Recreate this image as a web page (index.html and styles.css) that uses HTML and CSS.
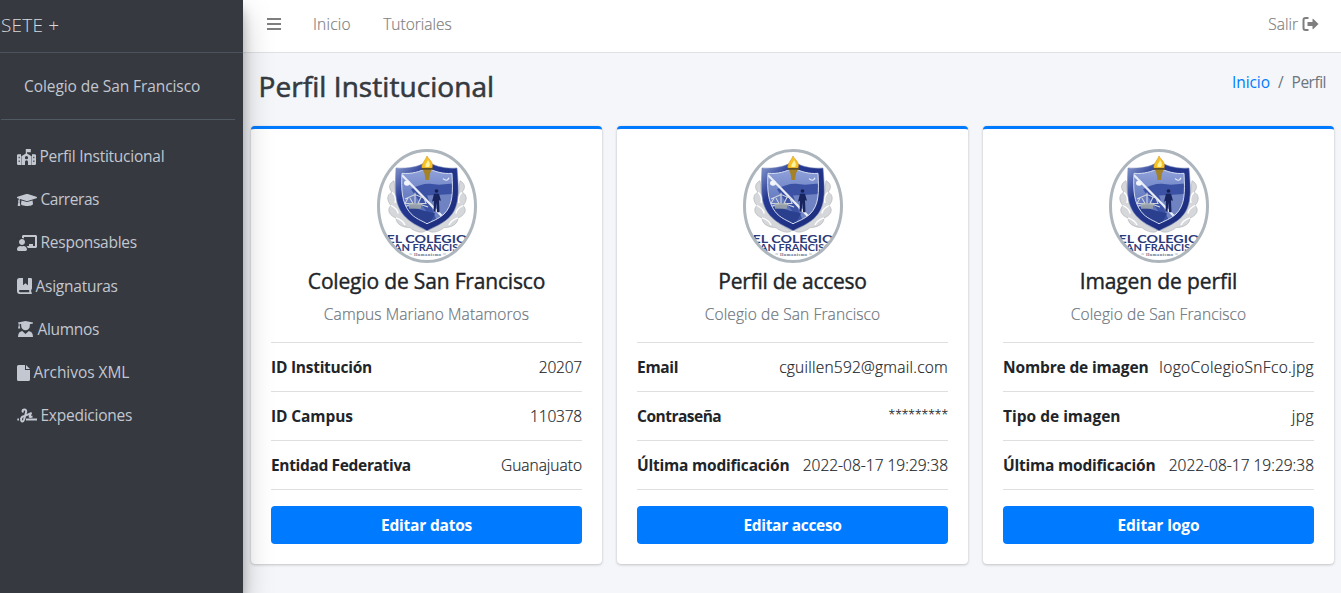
FILE: index.html
```html
<!DOCTYPE html>
<html lang="es">
<head>
<meta charset="utf-8">
<title>Perfil Institucional</title>
<link rel="stylesheet" href="styles.css">
</head>
<body>
<svg class="defs" width="0" height="0" aria-hidden="true">
  <defs>
    <linearGradient id="rim" x1="0" y1="0" x2="1" y2="1">
      <stop offset="0" stop-color="#8fa1d2"/><stop offset=".3" stop-color="#263a94"/><stop offset="1" stop-color="#1b2a78"/>
    </linearGradient>
    <linearGradient id="field" x1="0" y1="0" x2="0" y2="1">
      <stop offset="0" stop-color="#98a9df"/><stop offset=".45" stop-color="#6f84c6"/><stop offset="1" stop-color="#4a60ae"/>
    </linearGradient>
    <clipPath id="oval"><ellipse cx="50" cy="57" rx="47.5" ry="54.5"/></clipPath>
    <clipPath id="inner"><path d="M25 25C35 26 43 23 50 19C58 23 66 26 75 25C76 47 76 61 67 71C61 77 55 79 50 82C46 79 37 76 32 68C25 58 24 43 25 25Z"/></clipPath>
    <symbol id="crest" viewBox="0 0 100 114">
      <ellipse cx="50" cy="57" rx="50" ry="57" fill="#fff"/>
      <g clip-path="url(#oval)">
        <g transform="translate(0 2.5) scale(1 .885)">
          <g fill="#d5d7da" stroke="#a9adb1" stroke-width=".6">
            <path d="M17 33C12 36 11 41 15 46C9 49 10 56 14 61C9 66 13 73 19 75C19 83 27 86 33 86C38 91 46 93 49 89C37 84 27 75 22 62C18 51 18 40 17 33Z"/>
            <path d="M83 33C88 36 89 41 85 46C91 49 90 56 86 61C91 66 87 73 81 75C81 83 73 86 67 86C62 91 54 93 51 89C63 84 73 75 78 62C82 51 82 40 83 33Z"/>
          </g>
          <path d="M15 46C19 50 19 54 18 58M14 61C19 64 21 67 21 70M19 75C24 77 27 80 28 83M85 46C81 50 81 54 82 58M86 61C81 64 79 67 79 70M81 75C76 77 73 80 72 83" fill="none" stroke="#fff" stroke-width="1.5"/>
        </g>
        <g transform="translate(0 2.2) scale(1 .885)">
          <path d="M19 19C33 20 42 17 50 12C59 17 67 20 80 19C82 46 83 64 71 76C64 83 56 86 50 90C45 86 36 83 29 75C17 62 18 44 19 19Z" fill="url(#rim)" stroke="#7788b8" stroke-width=".6"/>
          <g clip-path="url(#inner)">
            <path d="M22 15H80V85H22Z" fill="url(#field)"/>
            <path d="M34 43C42 38 48 36 55 37L62 38L80 36V85H60Z" fill="#3b51a4"/>
            <path d="M50 50L80 48V85H62Z" fill="#6f83c3"/>
            <path d="M24 65C35 60 44 68 58 70L52 84H22Z" fill="#2b3f8f"/>
            <path d="M25 27L69 78" stroke="#e9edf8" stroke-width="2.4"/>
            <circle cx="30" cy="36" r="3" fill="#f3f5fc"/>
            <path d="M66 31Q70 35 72 30" fill="none" stroke="#e9edf9" stroke-width="1.2"/>
            <path d="M28 54L38 49L47 53M31 53L28 59H36L33 53M44 52L41 59H49L47 53M29 62Q39 57 51 63M38 47V60" fill="none" stroke="#d2d7df" stroke-width="1.1"/>
            <path d="M32 59H44V65H32Z" fill="#a3aaa7" opacity=".8"/>
          </g>
          <path d="M25 25C35 26 43 23 50 19C58 23 66 26 75 25C76 47 76 61 67 71C61 77 55 79 50 82C46 79 37 76 32 68C25 58 24 43 25 25Z" fill="none" stroke="#dce2f1" stroke-width="1"/>
          <circle cx="59.5" cy="45" r="1.9" fill="#151f50"/>
          <path d="M57 48H62L64 56L62 55.5L62.5 69H60L59.5 58L58.5 68H56.5L57 56L55 57Z" fill="#17245d"/>
        </g>
        <path d="M45.5 20H55L53 24.5L52 31H48.5L47.5 24.5Z" fill="#a38228"/>
        <path d="M45 19C44 15 48 12 50 7C52 11 57 13 55 19Z" fill="#f5c326" stroke="#d6961e" stroke-width=".6"/>
        <path d="M48.5 18C48 15 50 14 51 11C53 14 53.5 16 52 18Z" fill="#fff3a2"/>
        <path d="M44.5 19H56V20.8H44.5Z" fill="#5f4f29"/>
        <g text-anchor="middle" class="crest-text">
          <text x="50" y="94" font-size="11" textLength="81" lengthAdjust="spacingAndGlyphs">EL COLEGIO</text>
          <text x="54" y="102.3" font-size="9.5" textLength="86" lengthAdjust="spacingAndGlyphs">SAN FRANCISCO</text>
          <text x="50.5" y="107" font-size="4.5" textLength="36" class="motto">~ Humanismo ~</text>
        </g>
      </g>
      <ellipse cx="50" cy="57" rx="48.5" ry="55.5" fill="none" stroke="#adb5bd" stroke-width="3"/>
    </symbol>
  </defs>
</svg>
<div class="app">
  <aside class="sidebar">
    <div class="brand"><span class="t-brand">SETE +</span></div>
    <div class="user"><span class="t-user">Colegio de San Francisco</span></div>
    <nav class="menu">
      <a class="item"><svg width="19" height="16" viewBox="0 0 19 16"><path fill-rule="evenodd" d="M8.8 0h5v3.2H10v1.2L14.6 7.2V16H11v-3.2a1.5 1.5 0 0 0-3 0V16H4.4V7.2l4.4-2.8ZM9.5 7.1a1.6 1.6 0 1 0 0 3.2a1.6 1.6 0 0 0 0-3.2ZM4 5.2V16H1.2Q0 16 0 14.8V6.4Q0 5.2 1.2 5.2ZM1.6 7.8v1.5h1.1v-1.5ZM1.6 11.6v1.5h1.1v-1.5ZM15 5.2h2.8Q19 5.2 19 6.4v8.4Q19 16 17.8 16H15ZM16.3 7.8v1.5h1.1v-1.5ZM16.3 11.6v1.5h1.1v-1.5Z"/></svg><span class="t1">Perfil Institucional</span></a>
      <a class="item"><svg width="20" height="16" viewBox="0 0 640 512"><path d="M622.34 153.2L343.4 67.5c-15.2-4.67-31.6-4.67-46.79 0L17.66 153.2c-23.54 7.23-23.54 38.36 0 45.59l48.63 14.94c-10.67 13.19-17.23 29.28-17.88 46.9C38.78 266.15 32 276.11 32 288c0 10.78 5.68 19.85 13.86 25.65L20.33 428.53C18.11 438.52 25.71 448 35.94 448h56.11c10.24 0 17.84-9.48 15.62-19.47L82.14 313.65C90.32 307.85 96 298.78 96 288c0-11.57-6.47-21.25-15.66-26.87.76-15.02 8.44-28.3 20.69-36.72L296.6 284.5c9.06 2.78 26.44 6.25 46.79 0l278.95-85.7c23.55-7.24 23.55-38.36 0-45.6zM352.79 315.09c-28.53 8.76-52.84 3.92-65.59 0l-145.02-44.55L128 384c0 35.35 85.96 64 192 64s192-28.65 192-64l-14.18-113.47-145.03 44.56z"/></svg><span class="t2">Carreras</span></a>
      <a class="item"><svg width="20" height="16" viewBox="0 0 640 512"><path d="M208 352c-2.39 0-4.78.35-7.06 1.09C187.98 357.3 174.35 360 160 360c-14.35 0-27.98-2.7-40.95-6.91-2.28-.74-4.66-1.09-7.05-1.09C49.94 352-.33 402.48 0 464.62.14 490.88 21.73 512 48 512h224c26.27 0 47.86-21.12 48-47.38.33-62.14-49.94-112.62-112-112.62zm-48-32c53.02 0 96-42.98 96-96s-42.98-96-96-96-96 42.98-96 96 42.98 96 96 96zM592 0H208c-26.47 0-48 22.25-48 49.59V96c23.42 0 45.1 6.78 64 17.8V64h352v288h-64v-64H384v64h-76.24c19.1 16.69 33.12 38.73 39.69 64H592c26.47 0 48-22.25 48-49.59V49.59C640 22.25 618.47 0 592 0z"/></svg><span class="t3">Responsables</span></a>
      <a class="item"><svg width="15" height="16" viewBox="0 0 15 16"><path fill-rule="evenodd" d="M2.5 0H6v7.2L8.4 5.3L11 7.2V0h2.7Q15 0 15 1.2v9.3q0 .8-.8 1.2v2.5q.8 0 .8.9t-.8.9H2.8Q0 16 0 13V2.5Q0 0 2.5 0ZM3 12q-1 0-1 1.1t1 1.1h9.2V12Z"/></svg><span class="t4">Asignaturas</span></a>
      <a class="item"><svg width="17" height="16" viewBox="0 0 17 16"><path d="M8.5 0L16 1.5v1L12.8 3.2V5a4.3 4.3 0 0 1-8.6 0V3.2L2.6 2.8v1.7l.7 3H1l.7-3v-2L1 2.2v-.7ZM5.2 10L8.5 13L11.8 10Q16 10.7 16 16H1Q1 10.7 5.2 10Z"/></svg><span class="t5">Alumnos</span></a>
      <a class="item"><svg width="13" height="16" viewBox="0 0 13 16"><path d="M1.5 0H8v5h5v9.5Q13 16 11.5 16h-10Q0 16 0 14.5v-13Q0 0 1.5 0ZM9 0l4 4H9Z"/></svg><span class="t6">Archivos XML</span></a>
      <a class="item"><svg width="20" height="16" viewBox="0 0 20 16"><path class="line" d="M.3 11.4H2M6 4.5L5.6 3.2Q5.6 1.5 7.4 1.5Q9.4 1.5 9.2 3.8L7.1 11.5Q6.4 13.8 5 13.5Q3.7 13 4.1 11Q4.4 8.2 8.5 7.7L14 5.2L12.6 8.4Q12.6 9.2 13.6 9L15.5 8.6M9 11.4H20" /></svg><span class="t7">Expediciones</span></a>
    </nav>
  </aside>
  <div class="main">
    <header class="topbar">
      <svg class="bars" width="14" height="14" viewBox="0 0 14 14"><path d="M0 1h14v2H0ZM0 6h14v2H0ZM0 11h14v2H0Z"/></svg>
      <span class="t-inicio">Inicio</span>
      <span class="t-tut">Tutoriales</span>
      <span class="logout"><span class="t-salir">Salir</span><svg width="17" height="14" viewBox="0 0 16 14"><path d="M6 1H3Q1 1 1 3v8q0 2 2 2h3" fill="none" stroke="#7f7f7f" stroke-width="2"/><path d="M5 5h5V2.4q0-1 .9-.3L16 7l-5.1 4.9q-.9.7-.9-.3V9H5Z"/></svg></span>
    </header>
    <div class="heading">
      <h1><span class="t-h1">Perfil Institucional</span></h1>
      <div class="crumbs"><a class="t-c1">Inicio</a><span>/</span><span class="t-c2">Perfil</span></div>
    </div>
    <main class="cards">
      <section class="card">
        <svg class="logo" width="100" height="114"><use href="#crest"/></svg>
        <h2><span class="a-h">Colegio de San Francisco</span></h2>
        <p><span class="a-p">Campus Mariano Matamoros</span></p>
        <dl>
          <div><dt class="a1">ID Institución</dt><dd class="a2">20207</dd></div>
          <div><dt class="a3">ID Campus</dt><dd class="a4">110378</dd></div>
          <div><dt class="a5">Entidad Federativa</dt><dd class="a6">Guanajuato</dd></div>
        </dl>
        <button><span class="a-b">Editar datos</span></button>
      </section>
      <section class="card">
        <svg class="logo" width="100" height="114"><use href="#crest"/></svg>
        <h2><span class="b-h">Perfil de acceso</span></h2>
        <p><span class="b-p">Colegio de San Francisco</span></p>
        <dl>
          <div><dt class="b1">Email</dt><dd class="b2">cguillen592@gmail.com</dd></div>
          <div><dt class="b3">Contraseña</dt><dd class="b4">*********</dd></div>
          <div><dt class="mod">Última modificación</dt><dd class="date">2022-08-17 19:29:38</dd></div>
        </dl>
        <button><span class="b-b">Editar acceso</span></button>
      </section>
      <section class="card">
        <svg class="logo" width="100" height="114"><use href="#crest"/></svg>
        <h2><span class="c-h">Imagen de perfil</span></h2>
        <p><span class="b-p">Colegio de San Francisco</span></p>
        <dl>
          <div><dt class="c1">Nombre de imagen</dt><dd class="c2">logoColegioSnFco.jpg</dd></div>
          <div><dt class="c3">Tipo de imagen</dt><dd class="c4">jpg</dd></div>
          <div><dt class="mod">Última modificación</dt><dd class="date">2022-08-17 19:29:38</dd></div>
        </dl>
        <button><span class="c-b">Editar logo</span></button>
      </section>
    </main>
  </div>
</div>
</body>
</html>
```
FILE: styles.css
```css
* { box-sizing: border-box; }
body { margin: 0; overflow: hidden; font: 300 15.5px/24px "Open Sans", "Noto Sans", sans-serif; color: #212529; background: #f4f6f9; }
span, dt, dd { white-space: nowrap; }
.defs { position: absolute; }
.app { display: flex; height: 593px; }
.sidebar { width: 243px; flex: none; background: #363940; color: #c2c7d0; z-index: 1; box-shadow: 0 14px 28px rgba(0,0,0,.25), 0 10px 10px rgba(0,0,0,.22); font-weight: 400; }
.brand { height: 53px; padding: 13px 0 0 1px; border-bottom: 1px solid #4b545c; font-size: 19px; font-weight: 300; color: #d7d9dc; }
.user { height: 67px; margin: 0 8px 0 1px; padding: 21px 0 0 23px; border-bottom: 1px solid #4f5962; }
.menu { padding: 15px 0 0 16.5px; }
.item { display: flex; align-items: center; height: 43.2px; gap: 4px; }
.item span { margin-top: -1px; }
.item svg { fill: #c2c7d0; flex: none; }
.item .line { fill: none; stroke: #c2c7d0; stroke-width: 2; stroke-linejoin: round; }
.main { flex: 1; min-width: 0; }
.topbar { display: flex; align-items: center; height: 53px; padding: 0 22px 4px 24px; background: #fff; border-bottom: 1px solid #dee2e6; color: #7f7f7f; }
.topbar svg { fill: #7f7f7f; }
.topbar span, p span, dd { -webkit-text-stroke: .2px currentColor; }
.t-inicio { margin-left: 32px; }
.t-tut { margin-left: 32.5px; }
.logout { display: flex; align-items: center; gap: 4px; margin-left: auto; }
.heading { display: flex; justify-content: space-between; height: 73px; padding: 15px 15px 0 16px; }
h1 { margin: 0 0 0 -.5px; font-size: 28px; line-height: 36px; font-weight: 400; color: #343a40; -webkit-text-stroke: .6px currentColor; }
.crumbs { display: flex; gap: 8px; padding-top: 2px; color: #6c757d; font-weight: 400; }
.crumbs a { color: #007bff; }
.cards { display: grid; grid-template-columns: repeat(3, 351px); gap: 15px; padding-left: 8px; }
.card { display: flex; flex-direction: column; height: 438px; padding: 20px; border-top: 3px solid #007bff; border-radius: 4px; background: #fff; box-shadow: 0 0 1px rgba(0,0,0,.125), 0 1px 3px rgba(0,0,0,.2); }
.logo { align-self: center; flex: none; }
.crest-text { font-family: Lato, sans-serif; font-weight: 700; fill: #2b3a78; }
.crest-text .motto { font-family: "Liberation Serif", serif; fill: #68738d; }
h2 { margin: 6px 0 0; font-size: 21px; line-height: 25px; font-weight: 400; text-align: center; -webkit-text-stroke: .4px currentColor; }
p { margin: 8px 0 16px; line-height: 24px; text-align: center; color: #6c757d; }
dl { margin: 0 0 16px; border-bottom: 1px solid #dfdfdf; }
dl div { display: flex; justify-content: space-between; height: 49px; padding-top: 12px; border-top: 1px solid #dfdfdf; }
dt { font-weight: 700; }
dd { margin: 0; }
button { height: 38px; border: 0; border-radius: 4px; background: #007bff; color: #fff; font: 700 15.5px/24px "Open Sans", sans-serif; }

/* Tracking */
.t-brand { letter-spacing: .2px; }
.t-user { letter-spacing: -.08px; }
.t1 { letter-spacing: -.25px; }
.t2 { letter-spacing: -.45px; }
.t3, .t4, .t7 { letter-spacing: -.25px; }
.t5 { letter-spacing: -.33px; }
.t6 { letter-spacing: -.05px; }
.t-inicio { letter-spacing: .2px; }
.t-salir { letter-spacing: 0; }
.t-h1 { letter-spacing: .06px; }
.t-c1 { letter-spacing: -.1px; }
.t-c2 { letter-spacing: -.5px; }
.a-h { letter-spacing: -.17px; }
.a-p { letter-spacing: .1px; }
.a1 { letter-spacing: -.25px; }
.a2, .a4 { letter-spacing: -.2px; }
.a3, .c-b { letter-spacing: -.1px; }
.a5 { letter-spacing: -.34px; }
.a-b { letter-spacing: -.2px; }
.b-h { letter-spacing: -.26px; }
.b-p { letter-spacing: .12px; }
.b1 { letter-spacing: -.3px; }
.b2 { letter-spacing: .24px; }
.b3 { letter-spacing: -.5px; }
.b4 { font-size: 12px; line-height: 22px; }
.mod { letter-spacing: -.21px; }
.c-h { letter-spacing: -.12px; }
.c1 { letter-spacing: -.15px; }
.c2 { letter-spacing: .36px; }
.c4 { letter-spacing: .5px; }
.b-b { letter-spacing: -.3px; }
```
